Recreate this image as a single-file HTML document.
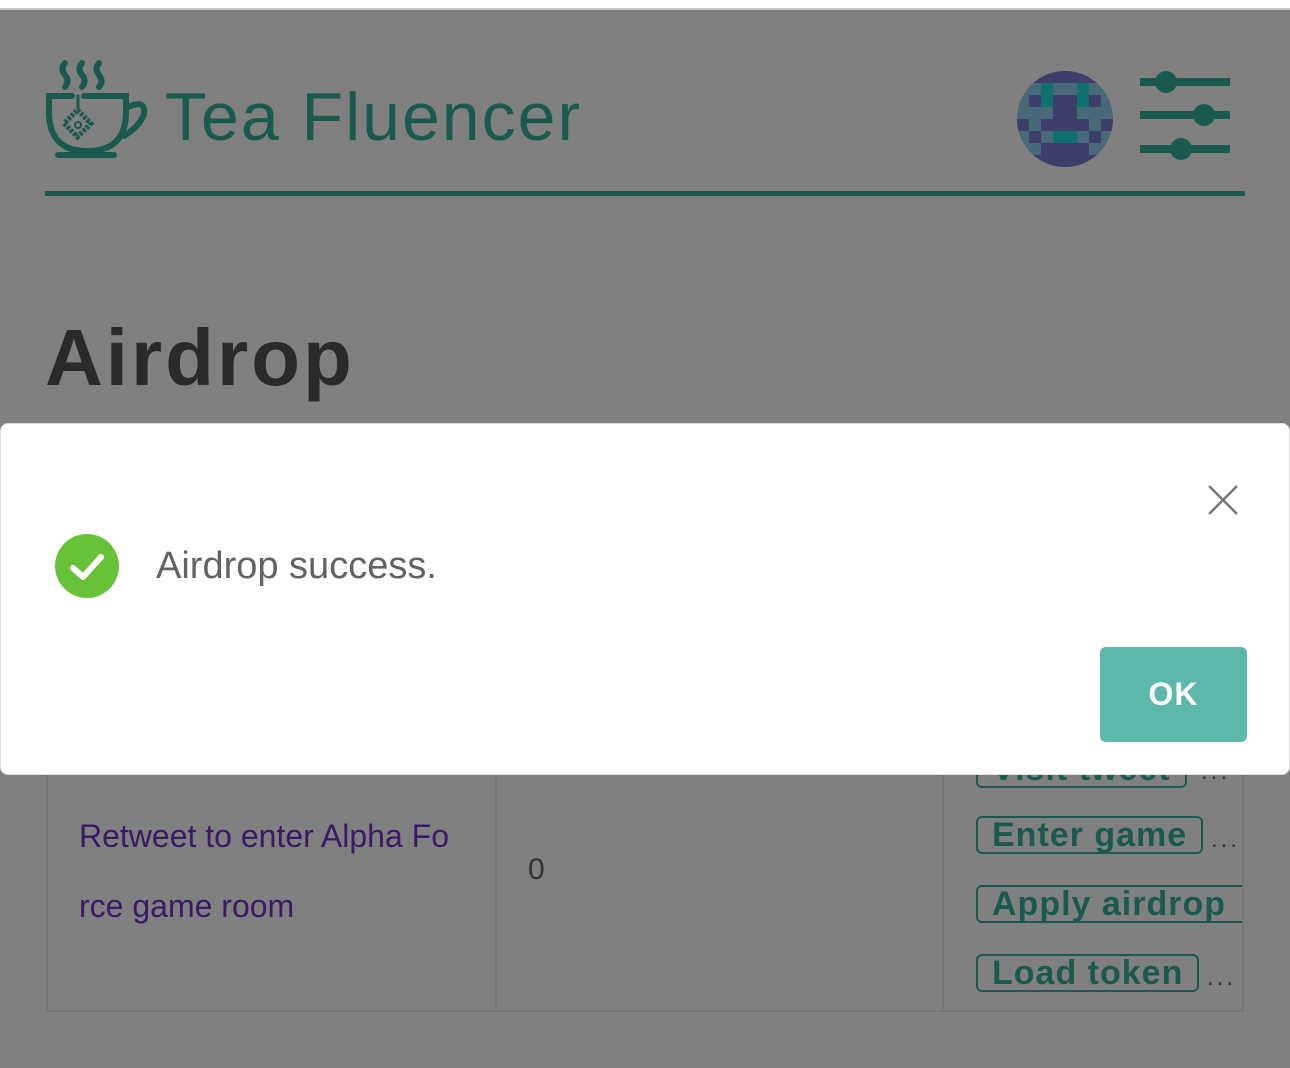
<!DOCTYPE html>
<html><head><meta charset="utf-8"><style>
*{margin:0;padding:0;box-sizing:border-box}
body{width:1290px;height:1068px;overflow:hidden;background:#808080;font-family:"Liberation Sans",sans-serif;position:relative}
.top{position:absolute;left:0;top:0;width:1290px;height:10px;background:#fff;border-bottom:2px solid #c8c8c8}
.abs{position:absolute}
.teal{color:#1a5a4e}
.btn{position:absolute;left:976px;border:2px solid #1a5a4e;border-radius:6px;color:#1a5a4e;font-weight:bold;font-size:34px;line-height:34px;padding:0 14px;letter-spacing:1px;white-space:nowrap}
.dots{position:absolute;color:#333;font-size:24px;letter-spacing:3px}
</style></head><body>
<div class="top"></div>
<svg class="abs" style="left:42px;top:60px" width="110" height="100" viewBox="0 0 110 100">
<g fill="none" stroke="#1a5a4e" stroke-width="6" stroke-linecap="round">
<path d="M23 3 q-5 6 0 12 q5 6 0 12"/><path d="M40 3 q-5 6 0 12 q5 6 0 12"/><path d="M57 3 q-5 6 0 12 q5 6 0 12"/>
<path d="M30 36 H7 V52 Q7 91 45 91 Q84 91 84 52 L84 36 H42"/>
<path d="M84 48 q20 -10 18 6 q-4 12 -20 22"/>
<path d="M16 95 H72"/>
<path d="M36 36 V48" stroke-width="3"/>
</g>
<rect x="26" y="54" width="19" height="19" fill="none" stroke="#1a5a4e" stroke-width="5" stroke-dasharray="3 1.5" transform="rotate(45 35.5 63.5)"/>
<circle cx="36" cy="65" r="3" fill="none" stroke="#1a5a4e" stroke-width="2"/>
</svg>
<div class="abs teal" style="left:165px;top:78px;font-size:68px;letter-spacing:2px">Tea Fluencer</div>
<svg class="abs" style="left:1017px;top:71px" width="96" height="96" viewBox="0 0 96 96">
<defs><clipPath id="c"><circle cx="48" cy="48" r="48"/></clipPath></defs>
<g clip-path="url(#c)" shape-rendering="crispEdges">
<rect width="96" height="96" fill="#486a78"/>
<g fill="#3e3e6a">
<rect x="12" y="0" width="72" height="12"/>
<rect x="12" y="24" width="12" height="12"/><rect x="36" y="24" width="24" height="24"/><rect x="72" y="24" width="12" height="12"/>
<rect x="0" y="48" width="12" height="12"/><rect x="24" y="48" width="48" height="12"/><rect x="84" y="48" width="12" height="12"/>
<rect x="12" y="60" width="12" height="12"/><rect x="72" y="60" width="12" height="12"/>
<rect x="24" y="72" width="48" height="12"/>
<rect x="0" y="84" width="96" height="12"/>
</g>
<g fill="#0f7070">
<rect x="24" y="12" width="12" height="24"/><rect x="60" y="12" width="12" height="24"/>
<rect x="36" y="60" width="24" height="12"/>
</g>
</g></svg>
<svg class="abs" style="left:1138px;top:68px" width="94" height="96">
<g stroke="#1a5a4e" stroke-width="8"><line x1="2" y1="14" x2="92" y2="14"/><line x1="2" y1="47" x2="92" y2="47"/><line x1="2" y1="81" x2="92" y2="81"/></g>
<g fill="#1a5a4e"><circle cx="28" cy="14" r="11"/><circle cx="66" cy="47" r="11"/><circle cx="43" cy="81" r="11"/></g></svg>
<div class="abs" style="left:45px;top:191px;width:1200px;height:5px;background:#1a5a4e"></div>
<div class="abs" style="left:45px;top:312px;font-size:80px;font-weight:bold;color:#2a2a2a;letter-spacing:3px">Airdrop</div>
<div class="abs" style="left:46px;top:740px;width:1198px;height:272px;border:2px solid #767676;border-top:none"></div>
<div class="abs" style="left:495px;top:740px;width:2px;height:272px;background:#767676"></div>
<div class="abs" style="left:942px;top:740px;width:2px;height:272px;background:#767676"></div>
<div class="abs" style="left:79px;top:801px;font-size:32px;line-height:70px;color:#3a1a66">Retweet to enter Alpha Fo<br>rce game room</div>
<div class="abs" style="left:528px;top:853px;font-size:30px;color:#333">0</div>
<div class="abs" style="left:944px;top:740px;width:298px;height:270px;overflow:hidden">
<div class="btn" style="left:32px;top:10px">Visit tweet</div><div class="dots" style="left:257px;top:18px">...</div>
<div class="btn" style="left:32px;top:76px">Enter game</div><div class="dots" style="left:267px;top:86px">...</div>
<div class="btn" style="left:32px;top:145px;width:300px">Apply airdrop</div>
<div class="btn" style="left:32px;top:214px">Load token</div><div class="dots" style="left:263px;top:224px">...</div>
</div>
<div class="abs" style="left:0;top:423px;width:1290px;height:352px;background:#fff;border-radius:8px;border:1px solid #ddd"></div>
<svg class="abs" style="left:1207px;top:484px" width="32" height="32"><g stroke="#777" stroke-width="2.5"><line x1="2" y1="2" x2="30" y2="30"/><line x1="30" y1="2" x2="2" y2="30"/></g></svg>
<svg class="abs" style="left:55px;top:534px" width="64" height="64"><circle cx="32" cy="32" r="32" fill="#67c23a"/><path d="M18 34 L28 43 L46 23" fill="none" stroke="#fff" stroke-width="6" stroke-linecap="round" stroke-linejoin="round"/></svg>
<div class="abs" style="left:156px;top:545px;font-size:38px;color:#606266">Airdrop success.</div>
<div class="abs" style="left:1100px;top:647px;width:147px;height:95px;background:#5cb8a8;border-radius:6px;color:#fff;font-weight:bold;font-size:32px;line-height:95px;text-align:center;letter-spacing:1px">OK</div>
</body></html>
